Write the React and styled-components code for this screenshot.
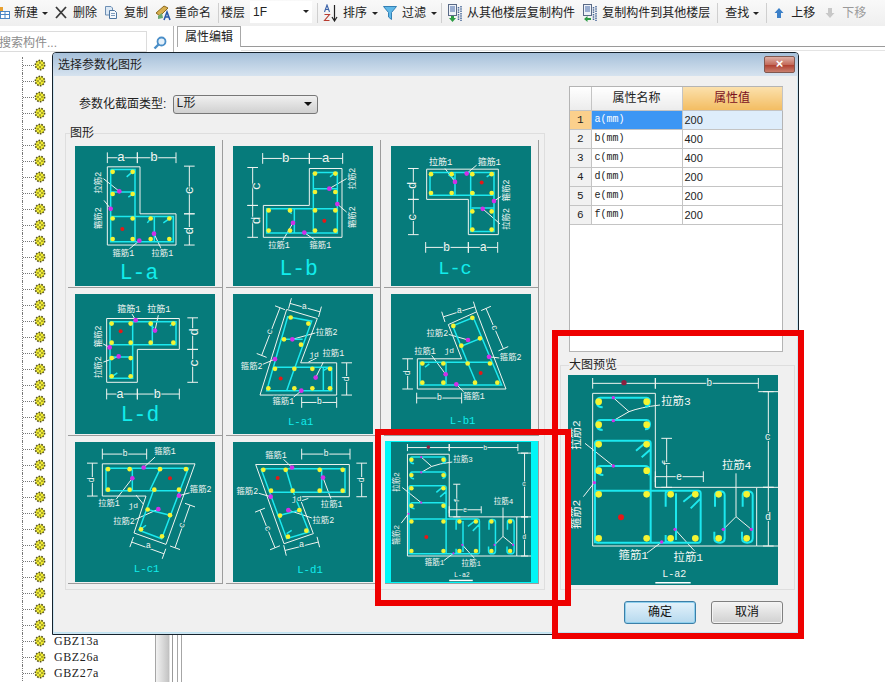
import React from "react";
import styled, { createGlobalStyle } from "styled-components";

const SANS = '"Liberation Sans", "Noto Sans CJK SC", sans-serif';
const MONO = '"Liberation Mono", "Noto Sans CJK SC", monospace';
const TEAL = "#067b7b";

const Global = createGlobalStyle`
  html, body {
    margin: 0;
    padding: 0;
    background: #fff;
    overflow: hidden;
  }
  * { box-sizing: border-box; }
`;

const Page = styled.div`
  position: relative;
  width: 885px;
  height: 682px;
  overflow: hidden;
  display: flex;
  flex-direction: column;
  font: 12px/16px ${SANS};
  color: #222;
`;

/* toolbar */
const Toolbar = styled.div`
  height: 26px;
  flex: none;
  display: flex;
  align-items: center;
  background: linear-gradient(#f9f9f9, #efefef);
  white-space: nowrap;
  overflow: hidden;
`;
const Tool = styled.div`
  display: flex;
  align-items: center;
  flex: none;
  margin-left: ${(p) => p.$ml || 0}px;
  gap: ${(p) => p.$gap || 0}px;
  color: ${(p) => (p.$off ? "#9a9a9a" : "#222")};
`;
const Caret = styled.span`
  flex: none;
  width: 0;
  height: 0;
  margin-left: ${(p) => p.$ml || 0}px;
  border-left: 3px solid transparent;
  border-right: 3px solid transparent;
  border-top: 3px solid #222;
`;
const ToolSep = styled.span`
  flex: none;
  width: 1px;
  height: 20px;
  margin-left: ${(p) => p.$ml || 0}px;
  background: #cfcfcf;
`;
const FloorCombo = styled.div`
  flex: none;
  width: 62px;
  height: 22px;
  margin: -3px 0 0 5px;
  padding: 0 3px;
  display: flex;
  align-items: center;
  justify-content: space-between;
  background: #fff;
`;

/* window behind the dialog */
const TopRow = styled.div`
  height: 26px;
  flex: none;
  display: flex;
`;
const SearchBox = styled.div`
  width: 151px;
  height: 21px;
  margin: 5px 0 0 -4px;
  padding-left: 2px;
  border: 1px solid #dcdcdc;
  background: #fff;
  color: #8c8c8c;
  font-size: 12px;
  line-height: 22px;
  white-space: nowrap;
`;
const SearchBtn = styled.div`
  width: 26px;
  padding: 10px 0 0 6px;
`;
const TabStrip = styled.div`
  flex: 1;
  border-left: 1px solid #b4b4b4;
  padding-left: 3px;
  display: flex;
`;
const Tab = styled.div`
  width: 64px;
  height: 21px;
  border: 1px solid #a8a8a8;
  border-bottom: none;
  background: #fff;
  text-align: center;
  line-height: 20px;
`;
const TabLine = styled.div`
  flex: 1;
  height: 25px;
  border-bottom: 1px solid #e4e4e4;
  background: linear-gradient(#fff 20px, #9a9a9a 20px, #9a9a9a 21px, #fff 21px);
`;
const Lower = styled.div`
  flex: 1;
  display: flex;
  min-height: 0;
`;
const Tree = styled.div`
  width: 155px;
  flex: none;
  padding: 5px 0 0 22px;
  overflow: hidden;
`;
const TreeRow = styled.div`
  height: 16px;
  display: flex;
  align-items: center;
  border-left: 1px dotted #777;
`;
const Connector = styled.span`
  width: 11px;
  flex: none;
  border-top: 1px dotted #777;
`;
const TreeLabel = styled.span`
  margin-left: 8px;
  font-family: "Liberation Serif", serif;
  letter-spacing: 0.6px;
  white-space: nowrap;
`;
const Splitter = styled.div`
  width: 18px;
  flex: none;
  border-left: 1px solid #a6a6a6;
  border-right: 1px solid #9a9a9a;
  background: linear-gradient(90deg, #f2f2f2, #c4c4c4 78%, #777 82%, #fff 85%);
`;
const PaneEdge = styled.div`
  width: 5px;
  margin-left: 4px;
  flex: none;
  border-left: 1px solid #a6a6a6;
  border-right: 1px solid #a6a6a6;
`;

/* dialog */
const Dialog = styled.div`
  position: absolute;
  left: 52px;
  top: 52px;
  width: 747px;
  height: 583px;
  display: flex;
  flex-direction: column;
  border: 1px solid #16222c;
  border-radius: 4px 4px 0 0;
  box-shadow: inset 0 0 0 1px #cfe6f2, inset 0 -2px 0 #bfe3f2;
  background: #f0f0f0;
  overflow: hidden;
`;
const TitleBar = styled.div`
  height: 23px;
  flex: none;
  padding: 3px 3px 0 5px;
  display: flex;
  justify-content: space-between;
  background: linear-gradient(#a6c0da, #d6e3ef);
`;
const TitleText = styled.span`
  line-height: 18px;
`;
const CloseBtn = styled.div`
  width: 31px;
  height: 17px;
  border: 1px solid #80584f;
  border-radius: 2px;
  background: linear-gradient(#dfb0a6, #c46c5c 50%, #b04030 55%, #c9806f);
  color: #fff;
  font: bold 13px/14px "Liberation Sans", sans-serif;
  text-align: center;
`;
const DialogBody = styled.div`
  flex: 1;
  display: flex;
  padding: 0 3px 0 12px;
`;
const LeftCol = styled.div`
  width: 480px;
  flex: none;
  padding-top: 19px;
`;
const TypeRow = styled.div`
  height: 18px;
  margin-bottom: 13px;
  padding-left: 14px;
  display: flex;
  align-items: center;
  gap: 7px;
`;
const TypeCombo = styled.div`
  width: 145px;
  height: 19px;
  padding: 0 5px 0 2px;
  display: flex;
  align-items: center;
  justify-content: space-between;
  border: 1px solid #777;
  border-radius: 3px;
  background: linear-gradient(#f0f0f0, #d0d0d0);
  font-family: ${MONO};
`;
const ComboCaret = styled.span`
  width: 0;
  height: 0;
  border-left: 4px solid transparent;
  border-right: 4px solid transparent;
  border-top: 4px solid #111;
`;
const Group = styled.fieldset`
  margin: 0;
  min-width: 0;
  border: 1px solid #dedede;
  padding: ${(p) => p.$pad};
`;
const Legend = styled.legend`
  padding: 0;
  margin-left: ${(p) => p.$ml}px;
  height: 14px;
  line-height: 14px;
`;
const ThumbGrid = styled.div`
  display: grid;
  grid-template-columns: repeat(3, 155px);
  grid-auto-rows: 148px;
  column-gap: 3px;
`;
const Thumb = styled.div`
  padding: ${(p) => (p.$selected ? "1px 7px 1px 6px" : "6px 7px 2px")};
  margin-top: ${(p) => (p.$selected ? "5px" : "0")};
  margin-left: ${(p) => (p.$selected ? "1px" : "0")};
  border-right: 1px solid #9c9c9c;
  border-bottom: 1px solid #9c9c9c;
  background: ${(p) => (p.$selected ? "#00f6f6" : "transparent")};
`;
const Drawing = styled.svg`
  display: block;
  background: ${TEAL};
`;
const DrawText = styled.text`
  font-family: ${MONO};
  text-anchor: middle;
  dominant-baseline: central;
  paint-order: stroke;
  stroke: ${TEAL};
`;
const RightCol = styled.div`
  width: 235px;
  flex: none;
  margin-left: 15px;
  padding-top: 10px;
`;
const PropPanel = styled.div`
  width: 214px;
  height: 266px;
  margin: 0 0 6px 9px;
  border: 1px solid #b4b4b4;
  background: #fff;
`;
const PropTable = styled.table`
  width: 212px;
  table-layout: fixed;
  border-collapse: collapse;
`;
const HeadCell = styled.th`
  height: 23px;
  padding: 0;
  font-weight: normal;
  font-size: 12px;
  text-align: center;
  color: ${(p) => (p.$active ? "#7a0f1e" : "#222")};
  background: ${(p) =>
    p.$active ? "linear-gradient(#fbe0ac, #f3bd62)" : "linear-gradient(#fff, #ececec)"};
  border-right: 1px solid #c4c4c4;
`;
const IndexCell = styled.td`
  height: 19px;
  padding: 0;
  text-align: center;
  font: 11px ${MONO};
  background: ${(p) => (p.$active ? "#fbd08c" : "#f1f1f1")};
  border: 1px solid #c4c4c4;
  border-left: none;
`;
const NameCell = styled.td`
  padding: 0 0 0 3px;
  font: 10px ${MONO};
  color: ${(p) => (p.$active ? "#fff" : "#222")};
  background: ${(p) => (p.$active ? "#3c96f4" : "#fff")};
  border: 1px solid #c4c4c4;
`;
const ValueCell = styled.td`
  padding: 0 0 0 2px;
  font-size: 11px;
  background: ${(p) => (p.$active ? "#deedfb" : "#fff")};
  border: 1px solid #c4c4c4;
  border-right: none;
`;
const Buttons = styled.div`
  margin-top: 11px;
  padding-right: 12px;
  display: flex;
  justify-content: flex-end;
  gap: 15px;
`;
const Button = styled.div`
  width: 72px;
  height: 23px;
  line-height: 21px;
  text-align: center;
  border-radius: 3px;
  border: 1px solid ${(p) => (p.$primary ? "#3c7fa8" : "#808080")};
  background: ${(p) =>
    p.$primary
      ? "linear-gradient(#e4f2fb, #b6d9ee)"
      : "linear-gradient(#f4f4f4, #d0d0d0)"};
  box-shadow: inset 0 0 0 1px ${(p) => (p.$primary ? "#8fd0ee" : "#f4f4f4")};
  color: #111;
`;

/* red marks lying over the shot */
const RedFrame = styled.div`
  position: absolute;
  border: 6px solid #ee0000;
  pointer-events: none;
`;
const ThumbFrame = styled(RedFrame)`
  left: 375px;
  top: 429px;
  width: 196px;
  height: 177px;
`;
const PreviewFrame = styled(RedFrame)`
  left: 552px;
  top: 330px;
  width: 252px;
  height: 309px;
`;

/* drawings, in coordinates of the section sheet */
const SHAPES = [
  {
    name: "L-a",
    view: "45 33 420 417",
    outline: "M142 95H240V235H348V328H142Z",
    steel: "M152 103H225V243M152 103V318H340V243H152M225 243V318M283 243V318M152 170H225M200 125L220 108M310 262L335 245M262 262L275 245M205 185L225 172",
    lead: "M130 130L178 168M132 195L152 220M238 315L205 342M282 294L305 342",
    dims: [[142, 68, 232, 68], [232, 68, 348, 68], [388, 93, 388, 235], [388, 235, 388, 328]],
    yellow: [[158, 110], [218, 110], [158, 176], [218, 176], [158, 249], [218, 249], [158, 310], [218, 310], [272, 249], [328, 249], [272, 310], [328, 310]],
    magenta: [[178, 168], [152, 220], [238, 315], [282, 294]],
    red: [[187, 280]],
    labels: [
      { t: "a", x: 183, y: 66, s: 40 }, { t: "b", x: 282, y: 66, s: 40 },
      { t: "c", x: 390, y: 165, s: 40, r: -90 }, { t: "d", x: 390, y: 285, s: 40, r: -90 },
      { t: "拉筋2", x: 118, y: 142, s: 25, r: -90 }, { t: "箍筋2", x: 118, y: 248, s: 25, r: -90 },
      { t: "箍筋1", x: 190, y: 355, s: 25 }, { t: "拉筋1", x: 307, y: 355, s: 25 },
      { t: "L-a", x: 237, y: 412, s: 64, c: "#12ecec" },
    ],
  },
  {
    name: "L-b",
    view: "519 33 420 417",
    outline: "M748 100H846V305H610V210H748Z",
    steel: "M760 112H832V292H620V220H832M760 112V292M760 160H830M703 222V290M685 225L695 235M810 125L825 112",
    lead: "M860 130L808 160M860 230L832 206M733 291L775 320M699 262L665 320",
    dims: [[608, 70, 748, 70], [748, 70, 848, 70], [578, 97, 578, 210], [578, 210, 578, 305]],
    yellow: [[765, 115], [826, 115], [765, 170], [826, 170], [765, 225], [826, 225], [765, 285], [826, 285], [626, 225], [690, 225], [626, 285], [690, 285]],
    magenta: [[808, 160], [832, 206], [733, 291], [699, 262]],
    red: [[793, 256]],
    labels: [
      { t: "b", x: 677, y: 70, s: 40 }, { t: "a", x: 797, y: 70, s: 40 },
      { t: "c", x: 590, y: 152, s: 40, r: -90 }, { t: "d", x: 590, y: 255, s: 40, r: -90 },
      { t: "拉筋2", x: 878, y: 130, s: 25, r: -90 }, { t: "箍筋2", x: 878, y: 245, s: 25, r: -90 },
      { t: "拉筋1", x: 657, y: 332, s: 25 }, { t: "箍筋1", x: 781, y: 332, s: 25 },
      { t: "L-b", x: 716, y: 400, s: 64, c: "#12ecec" },
    ],
  },
  {
    name: "L-c",
    view: "33 33 420 417",
    outline: "M140 102H355V297H265V192H140Z",
    steel: "M150 112H342V288H272V112M150 112V180H342M225 115V178M275 218H340M320 125L335 115M205 118L222 130M282 170V180",
    lead: "M195 100L225 140M290 90L260 115M368 180L342 197M360 265L308 220",
    dims: [[100, 100, 100, 192], [100, 192, 100, 297], [137, 335, 265, 335], [265, 335, 353, 335]],
    yellow: [[153, 117], [215, 117], [277, 117], [335, 117], [153, 173], [215, 173], [277, 173], [335, 173], [277, 228], [335, 228], [277, 282], [335, 282]],
    magenta: [[260, 115], [225, 140], [342, 197], [308, 220]],
    red: [[305, 142]],
    labels: [
      { t: "d", x: 100, y: 150, s: 36, r: -90 }, { t: "c", x: 100, y: 245, s: 36, r: -90 },
      { t: "b", x: 200, y: 337, s: 36 }, { t: "a", x: 310, y: 337, s: 36 },
      { t: "拉筋1", x: 182, y: 82, s: 27 }, { t: "箍筋1", x: 328, y: 82, s: 27 },
      { t: "箍筋2", x: 380, y: 165, s: 25, r: -90 }, { t: "拉筋2", x: 380, y: 250, s: 25, r: -90 },
      { t: "L-c", x: 225, y: 400, s: 56, c: "#12ecec" },
    ],
  },
  {
    name: "L-d",
    view: "45 477 420 417",
    outline: "M140 550H358V642H232V740H140Z",
    steel: "M150 560H348V628H150M150 560V728H218V560M150 665H218M277 562V626M330 572L342 562M160 720L172 712M270 570L282 578",
    lead: "M215 535L227 555M295 540L285 586M128 625L149 636M130 680L176 663",
    dims: [[140, 775, 232, 775], [232, 775, 358, 775], [398, 548, 398, 642], [398, 642, 398, 740]],
    yellow: [[155, 565], [212, 565], [272, 565], [340, 565], [155, 622], [212, 622], [272, 622], [340, 622], [155, 668], [212, 668], [155, 722], [212, 722]],
    magenta: [[227, 555], [285, 586], [149, 636], [176, 663]],
    red: [[182, 588]],
    labels: [
      { t: "a", x: 180, y: 776, s: 38 }, { t: "b", x: 292, y: 776, s: 38 },
      { t: "d", x: 403, y: 590, s: 38, r: -90 }, { t: "c", x: 403, y: 682, s: 38, r: -90 },
      { t: "箍筋1", x: 207, y: 523, s: 27 }, { t: "拉筋1", x: 297, y: 523, s: 27 },
      { t: "箍筋2", x: 118, y: 603, s: 25, r: -90 }, { t: "拉筋2", x: 118, y: 695, s: 25, r: -90 },
      { t: "L-d", x: 240, y: 838, s: 64, c: "#12ecec" },
    ],
  },
  {
    name: "L-a1",
    view: "519 477 420 417",
    outline: "M680 523L772 550L722 682H830V778H600Z",
    steel: "M683 545L755 558L705 695H815V765H620ZM643 695H705M665 612H728M703 700L680 765M790 697V765M790 705L808 695",
    lead: "M770 592L697 612M600 690L645 671M775 665L745 680M790 680L767 726M700 785L724 765",
    dims: [[690, 505, 780, 530], [660, 518, 605, 660], [860, 682, 860, 778], [725, 800, 830, 800]],
    yellow: [[692, 547], [745, 565], [672, 612], [723, 628], [645, 700], [703, 700], [757, 700], [810, 700], [625, 758], [703, 758], [757, 758], [810, 758]],
    magenta: [[697, 612], [645, 671], [767, 726], [724, 765]],
    red: [[662, 729]],
    labels: [
      { t: "a", x: 733, y: 517, s: 26 }, { t: "c", x: 630, y: 590, s: 26, r: -70 },
      { t: "d", x: 860, y: 730, s: 26, r: -90 }, { t: "b", x: 778, y: 800, s: 26 },
      { t: "拉筋2", x: 800, y: 592, s: 25 }, { t: "jd", x: 762, y: 657, s: 24 },
      { t: "拉筋1", x: 820, y: 655, s: 25 }, { t: "箍筋2", x: 575, y: 695, s: 25 },
      { t: "箍筋1", x: 670, y: 800, s: 25 }, { t: "L-a1", x: 722, y: 858, s: 32, c: "#12ecec" },
    ],
  },
  {
    name: "L-b1",
    view: "33 477 420 417",
    outline: "M205 568L290 530L378 760H112V670H245Z",
    steel: "M218 572L280 547L365 748H120V680H330M218 572L263 682M245 632L300 610M198 682V745M263 682L290 745M135 695L148 685",
    lead: "M205 597L264 614M362 668L327 664M155 660L197 716M262 780L229 746",
    dims: [[190, 545, 285, 515], [318, 520, 370, 640], [83, 670, 83, 760], [110, 787, 245, 787]],
    yellow: [[220, 572], [277, 548], [244, 631], [300, 609], [127, 684], [190, 684], [263, 684], [330, 684], [127, 741], [190, 741], [285, 741], [352, 741]],
    magenta: [[264, 614], [327, 664], [197, 716], [229, 746]],
    red: [[302, 712]],
    labels: [
      { t: "a", x: 238, y: 527, s: 26 }, { t: "c", x: 342, y: 578, s: 26, r: 68 },
      { t: "d", x: 83, y: 712, s: 26, r: -90 }, { t: "b", x: 178, y: 787, s: 26 },
      { t: "拉筋2", x: 172, y: 595, s: 25 }, { t: "拉筋1", x: 135, y: 650, s: 25 },
      { t: "jd", x: 208, y: 645, s: 24 }, { t: "箍筋2", x: 392, y: 668, s: 25 },
      { t: "箍筋1", x: 282, y: 785, s: 25 }, { t: "L-b1", x: 248, y: 855, s: 32, c: "#12ecec" },
    ],
  },
  {
    name: "L-c1",
    view: "45 37 420 417",
    outline: "M127 102H405L318 342L222 308L258 198H127Z",
    steel: "M138 115H385L305 325L237 300L280 182H138ZM282 182H357M300 118L270 180M217 118V182M262 238L330 255M245 295L258 285",
    lead: "M285 82L251 113M390 188L357 197M165 212L217 145M225 268L295 237M228 195L250 222",
    dims: [[127, 73, 260, 73], [97, 100, 97, 198], [215, 335, 312, 370], [390, 225, 345, 352]],
    yellow: [[144, 118], [209, 118], [300, 118], [378, 118], [144, 179], [209, 179], [283, 179], [357, 179], [263, 238], [330, 255], [243, 297], [306, 318]],
    magenta: [[251, 113], [217, 145], [357, 197], [295, 237]],
    red: [[330, 145]],
    labels: [
      { t: "b", x: 195, y: 74, s: 26 }, { t: "d", x: 97, y: 150, s: 26, r: -90 },
      { t: "a", x: 265, y: 348, s: 26 }, { t: "c", x: 367, y: 285, s: 26, r: -70 },
      { t: "箍筋1", x: 315, y: 68, s: 25 }, { t: "箍筋2", x: 422, y: 180, s: 25 },
      { t: "拉筋1", x: 147, y: 222, s: 25 }, { t: "jd", x: 220, y: 225, s: 24 },
      { t: "拉筋2", x: 192, y: 276, s: 25 }, { t: "L-c1", x: 260, y: 415, s: 32, c: "#12ecec" },
    ],
  },
  {
    name: "L-d1",
    view: "519 37 420 417",
    outline: "M587 104H868V200H718L760 310L672 340Z",
    steel: "M603 117H855V187H700L747 305L680 325L603 117M678 118L698 185M632 187H700M785 118V187M660 255L718 240M680 310L695 300",
    lead: "M670 88L696 113M590 188L632 200M815 212L789 143M770 268L685 240M725 212L745 205",
    dims: [[725, 73, 870, 73], [905, 100, 905, 200], [675, 360, 775, 335], [600, 240, 645, 352]],
    yellow: [[610, 120], [677, 120], [779, 120], [848, 120], [633, 182], [698, 182], [779, 182], [848, 182], [660, 256], [718, 240], [684, 319], [739, 301]],
    magenta: [[696, 113], [789, 143], [632, 200], [685, 240]],
    red: [[653, 144]],
    labels: [
      { t: "b", x: 798, y: 73, s: 26 }, { t: "d", x: 905, y: 150, s: 26, r: -90 },
      { t: "a", x: 725, y: 345, s: 26 }, { t: "c", x: 622, y: 295, s: 26, r: 68 },
      { t: "箍筋1", x: 648, y: 78, s: 25 }, { t: "箍筋2", x: 562, y: 187, s: 25 },
      { t: "jd", x: 710, y: 205, s: 24 }, { t: "拉筋1", x: 815, y: 224, s: 25 },
      { t: "拉筋2", x: 790, y: 272, s: 25 }, { t: "L-d1", x: 750, y: 418, s: 32, c: "#12ecec" },
    ],
  },
];

const PREVIEW = {
  name: "L-a2",
  view: "54 135 630 630",
  dot: 10,
  spot: 5,
  outline: "M128 190H316V472H620V648H128ZM620 472H684M620 648H684M625 185H684M316 472V440",
  steel: "M158 232C135 232 135 203 150 203H290C304 203 304 230 285 230M158 300C135 300 135 270 150 270H290C304 270 304 298 285 298M135 640V340Q135 332 143 332H295Q302 332 302 340V482M135 482H445Q452 482 452 490V630Q452 638 445 638H143Q135 638 135 630M302 482V638M160 435C138 435 135 408 150 408H285C302 408 302 430 295 435M378 490V630M347 530V490Q347 484 355 484M347 615V635H370M258 362L290 335M275 382L302 358M400 515L432 490M422 535L452 505M495 530V495Q495 484 510 484Q524 484 524 495V625Q524 638 510 638Q493 638 493 625V605M578 530V495Q578 484 592 484Q608 484 608 495V625Q608 638 592 638Q576 638 576 625V605",
  lead: "M190 203L237 245M190 272L237 245Q270 232 330 225M105 340L190 408M100 500L133 458M335 636L290 670M375 598L440 670M520 598L558 560L604 598M558 560V430",
  dims: [[128, 160, 316, 160], [316, 160, 625, 160], [655, 185, 655, 472], [655, 472, 655, 648], [350, 325, 350, 472], [316, 440, 460, 440]],
  yellow: [[146, 215], [290, 215], [146, 284], [290, 284], [146, 343], [290, 343], [146, 422], [290, 422], [146, 493], [290, 493], [146, 625], [290, 625], [362, 493], [436, 493], [362, 625], [436, 625], [506, 493], [590, 493], [506, 625], [590, 625]],
  magenta: [[190, 203], [190, 272], [190, 408], [133, 458], [335, 636], [375, 598], [520, 598], [604, 598]],
  red: [[213, 562]],
  maroon: [[222, 158]],
  labels: [
    { t: "b", x: 478, y: 160, s: 30 }, { t: "c", x: 653, y: 322, s: 30 },
    { t: "d", x: 654, y: 562, s: 30 }, { t: "f", x: 352, y: 398, s: 30, r: -90 },
    { t: "e", x: 387, y: 442, s: 30 },
    { t: "拉筋3", x: 378, y: 215, s: 34 }, { t: "拉筋4", x: 560, y: 407, s: 34 },
    { t: "拉筋2", x: 82, y: 315, s: 34, r: -90 }, { t: "箍筋2", x: 82, y: 553, s: 34, r: -90 },
    { t: "箍筋1", x: 250, y: 678, s: 34 }, { t: "拉筋1", x: 415, y: 684, s: 34 },
    { t: "L-a2", x: 373, y: 733, s: 30 },
  ],
  underline: "M316 758H422",
};

const Section = ({ shape, size }) => {
  const dot = shape.dot || 7;
  const spot = shape.spot || 7;
  const tick = 16;
  const weight = size > 200 ? 2 : 1.5;
  return (
    <Drawing viewBox={shape.view} width={size} height={size} preserveAspectRatio="none">
      <g fill="none" stroke="#f0f4f0" strokeWidth="1">
        <path d={shape.outline} vectorEffect="non-scaling-stroke" />
        <path d={shape.lead} vectorEffect="non-scaling-stroke" />
        {shape.dims.map(([x1, y1, x2, y2], i) => {
          const len = Math.hypot(x2 - x1, y2 - y1);
          const nx = ((y2 - y1) / len) * tick;
          const ny = ((x1 - x2) / len) * tick;
          return (
            <path
              key={i}
              vectorEffect="non-scaling-stroke"
              d={`M${x1} ${y1}L${x2} ${y2}M${x1 + nx} ${y1 + ny}L${x1 - nx} ${y1 - ny}M${x2 + nx} ${y2 + ny}L${x2 - nx} ${y2 - ny}`}
            />
          );
        })}
      </g>
      <path d={shape.steel} fill="none" stroke="#1ce8ee" strokeWidth={weight} vectorEffect="non-scaling-stroke" />
      {shape.underline && (
        <path d={shape.underline} stroke="#fff" strokeWidth="1.5" vectorEffect="non-scaling-stroke" />
      )}
      {shape.yellow.map(([x, y], i) => (
        <circle key={i} cx={x} cy={y} r={dot} fill="#f4f432" />
      ))}
      {shape.magenta.map(([x, y], i) => (
        <circle key={i} cx={x} cy={y} r={spot} fill="#d030e8" />
      ))}
      {shape.red.map(([x, y], i) => (
        <circle key={i} cx={x} cy={y} r={shape.dot ? 9 : 6} fill="#e41818" />
      ))}
      {(shape.maroon || []).map(([x, y], i) => (
        <circle key={i} cx={x} cy={y} r="8" fill="#8a2040" />
      ))}
      {shape.labels.map((l, i) => (
        <DrawText
          key={i}
          x={l.x}
          y={l.y}
          fontSize={l.s}
          fill={l.c || "#f2f6f2"}
          strokeWidth={l.c ? 0 : 6}
          transform={l.r ? `rotate(${l.r} ${l.x} ${l.y})` : undefined}
        >
          {l.t}
        </DrawText>
      ))}
    </Drawing>
  );
};

/* toolbar and tree icons */
const Icon = ({ w, h = 16, children }) => (
  <svg width={w} height={h} viewBox={`0 0 ${w} ${h}`} style={{ flex: "none" }}>
    {children}
  </svg>
);
const NewIcon = () => (
  <Icon w={10}>
    <path d="M-3 2L3 2L3 6L-3 6Z" fill="#e8a030" />
    <rect x="0.5" y="6.5" width="9" height="7" fill="#fff" stroke="#4c86c4" />
    <path d="M0 9.5H10M5 7V14" stroke="#4c86c4" />
  </Icon>
);
const DeleteIcon = () => (
  <Icon w={12}>
    <path d="M1 2L11 13M11 2L1 13" stroke="#3a3a3a" strokeWidth="1.8" fill="none" />
  </Icon>
);
const CopyIcon = () => (
  <Icon w={14}>
    <path d="M1.5 1.5H7L8.5 3V10H1.5Z" fill="#dce8f4" stroke="#6d8fb4" />
    <path d="M5.5 5.5H10.5L12.5 7.5V13.5H5.5Z" fill="#f4f8fc" stroke="#4f76a0" />
    <path d="M7 8.5H11M7 10.5H11" stroke="#7f9cbc" />
  </Icon>
);
const RenameIcon = () => (
  <Icon w={16} h={18}>
    <path d="M1 9L9 2L13 4L5 12Z" fill="#d8b050" stroke="#8c6a20" />
    <path d="M3 12L7 9L8 14L3 15Z" fill="#6aa870" />
    <path d="M9 16L12 8L15 16M10.5 13H13.5" fill="none" stroke="#2858a8" strokeWidth="1.6" />
  </Icon>
);
const SortIcon = () => (
  <svg width="15" height="18" viewBox="0 0 15 18" style={{ flex: "none" }}>
    <path d="M1.5 8L4 1L6.5 8M2.5 5.5H5.5" fill="none" stroke="#3a62a8" strokeWidth="1.1" />
    <path d="M1.5 10.5H6.5L1.5 16.5H6.5" fill="none" stroke="#b83c30" strokeWidth="1.1" />
    <path d="M11.5 1V16M9 13L11.5 17L14 13" fill="none" stroke="#222" strokeWidth="1.2" />
  </svg>
);
const FilterIcon = () => (
  <Icon w={14}>
    <path d="M0.5 1.5H13.5L8.5 7.5V14.5L5.5 12V7.5Z" fill="#5fb8e8" stroke="#3480b4" />
  </Icon>
);
const FloorCopyIcon = ({ arrow }) => (
  <Icon w={16} h={18}>
    <rect x="1.5" y="0.5" width="8" height="11" fill="#eef2f8" stroke="#5a6a86" />
    <path d="M3 3H8M3 5H8M3 7H8" stroke="#4468a8" />
    <path d="M11.5 3V16M14 2V17" stroke="#4a6a9a" strokeWidth="1.5" strokeDasharray="1.5 0.8" />
    <path d={arrow} fill="#2c9c44" />
  </Icon>
);
const UpIcon = () => (
  <Icon w={10} h={12}>
    <path d="M5 1L9.5 6H7V11H3V6H0.5Z" fill="#3c80c8" />
  </Icon>
);
const DownIcon = () => (
  <Icon w={10} h={12}>
    <path d="M5 11L9.5 6H7V1H3V6H0.5Z" fill="#c8c8c8" />
  </Icon>
);
const LensIcon = () => (
  <Icon w={14} h={14}>
    <circle cx="8.5" cy="5.5" r="4" fill="#e4f0fa" stroke="#4a8ec8" strokeWidth="1.8" />
    <path d="M5.5 8.5L1.5 12.5" stroke="#4a8ec8" strokeWidth="2.4" />
  </Icon>
);
const NodeIcon = () => (
  <Icon w={12} h={12}>
    <circle cx="6" cy="6" r="4.6" fill="#f0ec30" stroke="#54501a" strokeWidth="1.6" strokeDasharray="1.6 1.2" />
    <path d="M6 3V9M3 6H9" stroke="#6a6620" strokeWidth="1.1" />
    <circle cx="6" cy="6" r="1.2" fill="#f6f260" />
  </Icon>
);

const TREE = [...Array(36).fill(""), "GBZ13a", "GBZ26a", "GBZ27a"];
const PROPS = [
  ["a(mm)", 200],
  ["b(mm)", 400],
  ["c(mm)", 400],
  ["d(mm)", 200],
  ["e(mm)", 200],
  ["f(mm)", 200],
];

const App = () => {
  return (
    <Page>
      <Global />
      <Toolbar>
        <Tool $gap={4}>
          <NewIcon />
          <span>新建</span>
          <Caret />
        </Tool>
        <Tool $ml={7} $gap={6}>
          <DeleteIcon />
          <span>删除</span>
        </Tool>
        <Tool $ml={7} $gap={6}>
          <CopyIcon />
          <span>复制</span>
        </Tool>
        <Tool $ml={7} $gap={4}>
          <RenameIcon />
          <span>重命名</span>
        </Tool>
        <ToolSep $ml={7} />
        <Tool $ml={2}>楼层</Tool>
        <FloorCombo>
          <span>1F</span>
          <Caret />
        </FloorCombo>
        <ToolSep $ml={5} />
        <Tool $ml={5} $gap={5}>
          <SortIcon />
          <span>排序</span>
          <Caret />
        </Tool>
        <Tool $ml={5} $gap={5}>
          <FilterIcon />
          <span>过滤</span>
          <Caret />
        </Tool>
        <ToolSep $ml={4} />
        <Tool $ml={5} $gap={4}>
          <FloorCopyIcon arrow="M2 14H4V12H7V14H9L5.5 18Z" />
          <span>从其他楼层复制构件</span>
        </Tool>
        <Tool $ml={7} $gap={4}>
          <FloorCopyIcon arrow="M2 15L5.5 12V14H9V16H5.5V18Z" />
          <span>复制构件到其他楼层</span>
        </Tool>
        <ToolSep $ml={7} />
        <Tool $ml={7}>
          <span>查找</span>
          <Caret $ml={4} />
        </Tool>
        <ToolSep $ml={7} />
        <Tool $ml={7} $gap={7}>
          <UpIcon />
          <span>上移</span>
        </Tool>
        <Tool $ml={10} $gap={7} $off>
          <DownIcon />
          <span>下移</span>
        </Tool>
      </Toolbar>

      <TopRow>
        <SearchBox>搜索构件...</SearchBox>
        <SearchBtn>
          <LensIcon />
        </SearchBtn>
        <TabStrip>
          <Tab>属性编辑</Tab>
          <TabLine />
        </TabStrip>
      </TopRow>

      <Lower>
        <Tree>
          {TREE.map((label, i) => (
            <TreeRow key={i}>
              <Connector />
              <NodeIcon />
              {label && <TreeLabel>{label}</TreeLabel>}
            </TreeRow>
          ))}
        </Tree>
        <Splitter />
        <PaneEdge />
      </Lower>

      <Dialog>
        <TitleBar>
          <TitleText>选择参数化图形</TitleText>
          <CloseBtn>×</CloseBtn>
        </TitleBar>
        <DialogBody>
          <LeftCol>
            <TypeRow>
              <span>参数化截面类型:</span>
              <TypeCombo>
                <span>L形</span>
                <ComboCaret />
              </TypeCombo>
            </TypeRow>
            <Group $pad="0 5px 5px 2px">
              <Legend $ml={2}>图形</Legend>
              <ThumbGrid>
                {SHAPES.map((shape) => (
                  <Thumb key={shape.name}>
                    <Section shape={shape} size={140} />
                  </Thumb>
                ))}
                <Thumb $selected>
                  <Section shape={PREVIEW} size={140} />
                </Thumb>
              </ThumbGrid>
            </Group>
          </LeftCol>
          <RightCol>
            <PropPanel>
              <PropTable>
                <colgroup>
                  <col width="21" />
                  <col width="91" />
                  <col width="100" />
                </colgroup>
                <thead>
                  <tr>
                    <HeadCell />
                    <HeadCell>属性名称</HeadCell>
                    <HeadCell $active>属性值</HeadCell>
                  </tr>
                </thead>
                <tbody>
                  {PROPS.map(([name, value], i) => (
                    <tr key={name}>
                      <IndexCell $active={i === 0}>{i + 1}</IndexCell>
                      <NameCell $active={i === 0}>{name}</NameCell>
                      <ValueCell $active={i === 0}>{value}</ValueCell>
                    </tr>
                  ))}
                </tbody>
              </PropTable>
            </PropPanel>
            <Group $pad="3px 16px 4px 7px">
              <Legend $ml={1}>大图预览</Legend>
              <Section shape={PREVIEW} size={210} />
            </Group>
            <Buttons>
              <Button $primary>确定</Button>
              <Button>取消</Button>
            </Buttons>
          </RightCol>
        </DialogBody>
      </Dialog>

      <ThumbFrame />
      <PreviewFrame />
    </Page>
  );
};

export default App;
